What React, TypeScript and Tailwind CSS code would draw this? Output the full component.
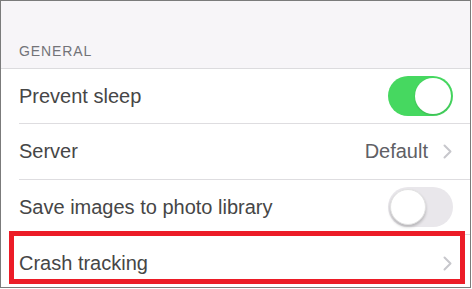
import React from "react";

function Chevron() {
  return (
    <svg width="9" height="15" viewBox="0 0 9 15" className="block">
      <polyline points="1.5,1.5 7.5,7.5 1.5,13.5" fill="none" stroke="#c7c7cc" strokeWidth="2" strokeLinecap="round" strokeLinejoin="round" />
    </svg>
  );
}

function Toggle({ on }: { on: boolean }) {
  return on ? (
    <div className="w-[65px] h-[40px] rounded-full bg-[#46d860] flex items-center justify-end p-[2px]">
      <div className="w-[36px] h-[36px] rounded-full bg-white shadow-[0_1px_2px_rgba(0,0,0,0.15)]" />
    </div>
  ) : (
    <div className="w-[65px] h-[40px] rounded-full bg-[#e9e7eb] flex items-center justify-start p-[2px]">
      <div className="w-[36px] h-[36px] rounded-full bg-white shadow-[0_2px_3px_rgba(0,0,0,0.22)] border border-[#e2e2e2]" />
    </div>
  );
}

function Row({ label, h, last, children }: { label: string; h: string; last?: boolean; children?: React.ReactNode }) {
  return (
    <div className="pl-[18px] bg-white">
      <div className={`${h} flex items-center justify-between pr-[17px] ${last ? "" : "border-b border-[#dedde0]"}`}>
        <span className="text-[20px] text-[#464646] leading-[23px]">{label}</span>
        {children}
      </div>
    </div>
  );
}

export default function App() {
  return (
    <div className="w-[472px] h-[289px] bg-white relative overflow-hidden" style={{ fontFamily: '"Liberation Sans", Arial, sans-serif' }}>
      <div className="w-[471px] h-[288px] border border-[#7b7b7b] flex flex-col bg-white overflow-hidden">
        <div className="h-[68px] shrink-0 bg-[#f7f5f8] border-b border-[#dcdbde] pl-[18px] pt-[42px]">
          <div className="text-[14px] leading-[16px] tracking-[0.9px] text-[#737378]">GENERAL</div>
        </div>
        <Row label="Prevent sleep" h="h-[55px]">
          <Toggle on />
        </Row>
        <Row label="Server" h="h-[56px]">
          <div className="flex items-center gap-[15px] pr-[1px]">
            <span className="text-[20px] leading-[23px] text-[#606065]">Default</span>
            <Chevron />
          </div>
        </Row>
        <Row label="Save images to photo library" h="h-[55px]">
          <Toggle on={false} />
        </Row>
        <Row label="Crash tracking" h="h-[56px]" last>
          <div className="pr-[1px]">
            <Chevron />
          </div>
        </Row>
      </div>
      <div className="absolute left-[9px] top-[231px] w-[456px] h-[53px] border-[5px] border-[#ec1c27] pointer-events-none" />
    </div>
  );
}
